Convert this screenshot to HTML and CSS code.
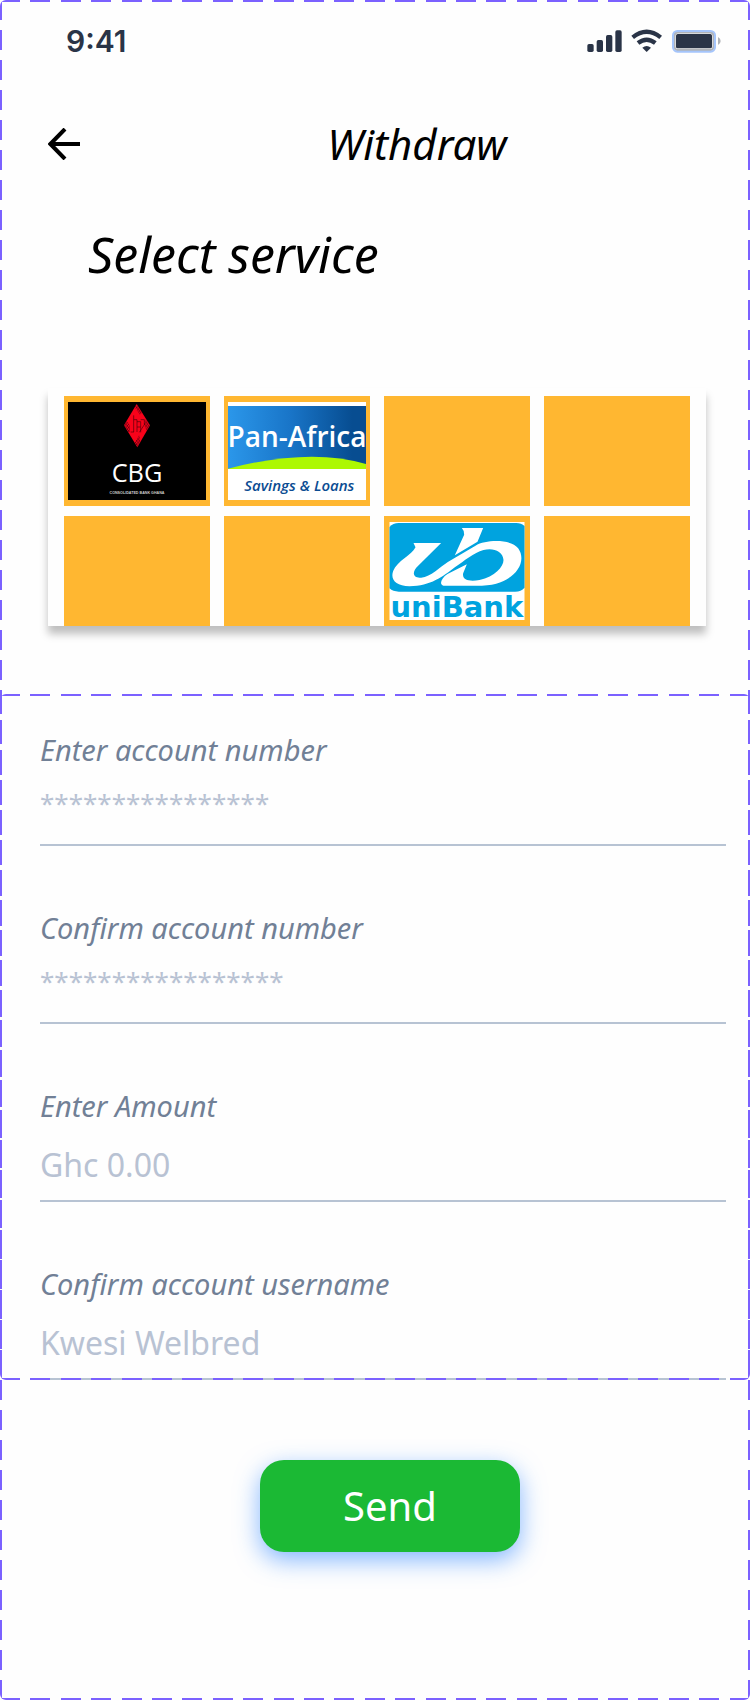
FILE: index.html
```html
<!DOCTYPE html>
<html lang="en">
<head>
<meta charset="utf-8">
<meta name="viewport" content="width=device-width, initial-scale=1">
<title>Withdraw</title>
<link rel="stylesheet" href="styles.css">
</head>
<body>
<main class="screen">
  <div class="status">
    <span class="time">9:41</span>
    <svg class="status-icons" viewBox="636 84 402 78" role="img" aria-label="Signal, Wi-Fi, battery">
      <g fill="#2a3447">
        <rect x="637" y="132" width="19" height="24" rx="5"/>
        <rect x="665" y="120" width="19" height="36" rx="5"/>
        <rect x="693" y="105" width="19" height="51" rx="5"/>
        <rect x="721" y="91" width="19" height="65" rx="5"/>
        <path d="M802 143Q815 133 828 143L815 156Z"/>
        <rect x="903" y="102" width="108" height="43" rx="5"/>
      </g>
      <g fill="none" stroke="#2a3447" stroke-width="13">
        <path d="M773 112Q815 79 857 112"/>
        <path d="M789 129Q815 109 841 129"/>
      </g>
      <rect x="898" y="97" width="118" height="53" rx="10" fill="none" stroke="#b0b3b8" stroke-width="7"/>
      <rect x="894" y="93" width="126" height="62" rx="13" fill="none" stroke="#a5c5fb" stroke-width="6"/>
      <path d="M1029 111Q1037 115 1037 123T1029 135Z" fill="#b0b3b8"/>
    </svg>
  </div>

  <header class="header">
    <button class="back" type="button" aria-label="Back">
      <svg viewBox="0 0 96 96" aria-hidden="true"><path d="M51 3L7 48L51 93M7 48H96" fill="none" stroke="#000" stroke-width="12"/></svg>
    </button>
    <h1 class="title">Withdraw</h1>
  </header>

  <h2 class="heading">Select service</h2>

  <section class="services" aria-label="Services">
    <button class="tile" type="button" aria-label="Consolidated Bank Ghana">
      <svg class="logo" viewBox="84 66 414 294">
        <defs>
          <pattern id="check" width="8" height="10" patternUnits="userSpaceOnUse"><path d="M0 0h4v5h-4zM4 5h4v5h-4z" fill="#700010"/></pattern>
        </defs>
        <path d="M84 66h414v294H84z" fill="#000"/>
        <path d="M290 72L330 136L292 202L252 136Z" fill="#f8021a"/>
        <path d="M290 72L306 98L300 104L284 82ZM252 136L260 123L270 138V156H264ZM330 136L320 152L311 132L318 117ZM292 202L284 188L298 164L301 186Z" fill="url(#check)"/>
        <path d="M281 106V156M281 119H291V156M291 125H302V157M302 119H313V134L298 157M272 156H282M291 141H302" fill="none" stroke="#500009" stroke-width="2"/>
        <text class="cbg" x="291" y="306">CBG</text>
        <text class="cbg-note" x="291" y="342">CONSOLIDATED BANK GHANA</text>
      </svg>
    </button>
    <button class="tile" type="button" aria-label="Pan-Africa Savings and Loans">
      <svg class="logo" viewBox="564 66 414 294">
        <defs>
          <linearGradient id="sky" x2="1" y2="0"><stop offset="0" stop-color="#2b97ea"/><stop offset=".45" stop-color="#1975c8"/><stop offset=".9" stop-color="#074d91"/></linearGradient>
        </defs>
        <path d="M564 66h414v294H564z" fill="#fff"/>
        <path d="M564 78H978V267H564Z" fill="url(#sky)"/>
        <path d="M564 266Q810 202 978 252V267H564Z" fill="#adf802"/>
        <text class="pan" x="771" y="200">Pan-Africa</text>
        <text class="pan-note" x="778" y="334">Savings &amp; Loans</text>
      </svg>
    </button>
    <button class="tile" type="button" aria-label="Service 3"></button>
    <button class="tile" type="button" aria-label="Service 4"></button>
    <button class="tile" type="button" aria-label="Service 5"></button>
    <button class="tile" type="button" aria-label="Service 6"></button>
    <button class="tile" type="button" aria-label="uniBank">
      <svg class="logo" viewBox="60 426 405 294">
        <path d="M60 426h405v294H60z" fill="#fff"/>
        <path d="M60 441Q70 429 88 429H440Q456 429 465 438V623Q455 635 437 635H88Q70 635 60 625Z" fill="#00a3df"/>
        <path d="M132 489H215L146 557C124 578 132 596 155 593C185 590 210 562 235 546L318 497C350 478 425 477 446 505C474 545 438 596 380 611Q352 618 310 617H222C208 614 215 594 234 582L292 553L281 580C277 600 300 606 330 600C376 590 402 561 402 540C400 512 370 503 342 510C312 518 286 542 256 562C220 590 184 618 120 619C78 618 62 598 71 573C82 544 128 524 138 502Z" fill="#fff"/>
        <path d="M277 444H341L324 485L256 526L284 464Q286 454 277 444Z" fill="#fff"/>
        <text class="uni" x="262" y="711">uniBank</text>
      </svg>
    </button>
    <button class="tile" type="button" aria-label="Service 8"></button>
  </section>

  <form class="form" id="withdraw">
    <div class="field">
      <label class="label" for="account">Enter account number</label>
      <input class="input masked" id="account" type="text" placeholder="****************">
    </div>
    <div class="field">
      <label class="label" for="account2">Confirm account number</label>
      <input class="input masked" id="account2" type="text" placeholder="*****************">
    </div>
    <div class="field">
      <label class="label" for="amount">Enter Amount</label>
      <input class="input" id="amount" type="text" placeholder="Ghc 0.00">
    </div>
    <div class="field">
      <label class="label" for="username">Confirm account username</label>
      <input class="input" id="username" type="text" placeholder="Kwesi Welbred">
    </div>
  </form>

  <button class="send" type="submit" form="withdraw">Send</button>
</main>
</body>
</html>
```

FILE: styles.css
```css
* { box-sizing: border-box; }

body {
  margin: 0;
  background: #fefefe;
  font-family: "Noto Sans", "Open Sans", sans-serif;
  color: #000;
}

button {
  border: 0;
  padding: 0;
  font: inherit;
  cursor: pointer;
}

.screen {
  --across: repeating-linear-gradient(90deg, #7b61ff 0 20px, transparent 20px calc((100% + 10px) / 25));
  --down: repeating-linear-gradient(180deg, #7b61ff 0 20px, transparent 20px calc((100% + 10px) / 57));
  position: relative;
  display: flex;
  flex-direction: column;
  min-height: 100vh;
}

/* dashed outlines of the screen and the form */
.screen::after,
.form::after {
  content: "";
  position: absolute;
  inset: 0;
  border-radius: 6px;
  pointer-events: none;
  background:
    var(--across) top / 100% 2px no-repeat,
    var(--across) bottom / 100% 2px no-repeat,
    var(--down) left / 2px 100% no-repeat,
    var(--down) right / 2px 100% no-repeat;
}

.status {
  display: flex;
  align-items: center;
  justify-content: space-between;
  height: 82px;
  padding: 0 29px 0 66px;
}

.time {
  font: 600 30px/36px Inter, sans-serif;
  color: #2a3447;
}

.status-icons {
  width: 134px;
  height: 26px;
}

.header {
  display: flex;
  align-items: center;
  height: 124px;
  padding-left: 48px;
}

.back {
  width: 32px;
  height: 32px;
  background: none;
}

.back svg { display: block; }

.title {
  flex: 1;
  margin: 0;
  padding-left: 4px;
  text-align: center;
  font-size: 42px;
  line-height: 48px;
  font-weight: 400;
  font-style: italic;
}

.heading {
  margin: 18px 88px 0;
  font-size: 50px;
  line-height: 60px;
  font-weight: 400;
  font-style: italic;
}

.services {
  display: grid;
  grid-template-columns: repeat(4, 1fr);
  grid-auto-rows: 110px;
  gap: 10px 14px;
  margin: 104px 44px 0 48px;
  padding: 8px 16px 0;
  background: #fefefe;
  box-shadow: 0 8px 8px rgba(0, 0, 0, .25);
}

.tile {
  padding: 6px 4px;
  background: #ffb731;
}

.logo {
  display: block;
  width: 100%;
  height: 98px;
  overflow: visible;
}

.logo text { text-anchor: middle; }

.cbg { font: 76px "Open Sans", sans-serif; fill: #fff; }
.cbg-note { font: 700 11px "Liberation Sans", sans-serif; fill: #ccc; }
.pan { font: 600 84px "Open Sans", sans-serif; fill: #fff; }
.pan-note { font: italic 600 45px "Open Sans", sans-serif; fill: #0b4c92; }
.uni { font: 700 87px "DejaVu Sans", sans-serif; fill: #00a3df; }

.form {
  --down: repeating-linear-gradient(180deg, #7b61ff 0 20px, transparent 20px calc((100% + 10px) / 23));
  position: relative;
  display: grid;
  gap: 62px;
  margin-top: 68px;
  padding: 36px 24px 0 40px;
}

.field {
  display: flex;
  flex-direction: column;
}

.label {
  font-size: 29px;
  line-height: 40px;
  font-style: italic;
  color: #718096;
}

.input {
  width: 100%;
  height: 76px;
  padding: 2px 0 0;
  border: 0;
  border-bottom: 2px solid #b7c3d3;
  background: none;
  font: 32px/44px "Noto Sans", "Open Sans", sans-serif;
  color: #4a5568;
}

.input::placeholder {
  color: #b8c2d3;
  opacity: 1;
}

.masked {
  padding: 0 0 8px;
  font-size: 26px;
}

.send {
  width: 260px;
  height: 92px;
  margin: 80px auto 60px 260px;
  border-radius: 24px;
  background: #1bb934;
  box-shadow: 0 8px 24px rgba(50, 135, 255, .6);
  font-size: 40px;
  line-height: 48px;
  color: #fff;
}
```
